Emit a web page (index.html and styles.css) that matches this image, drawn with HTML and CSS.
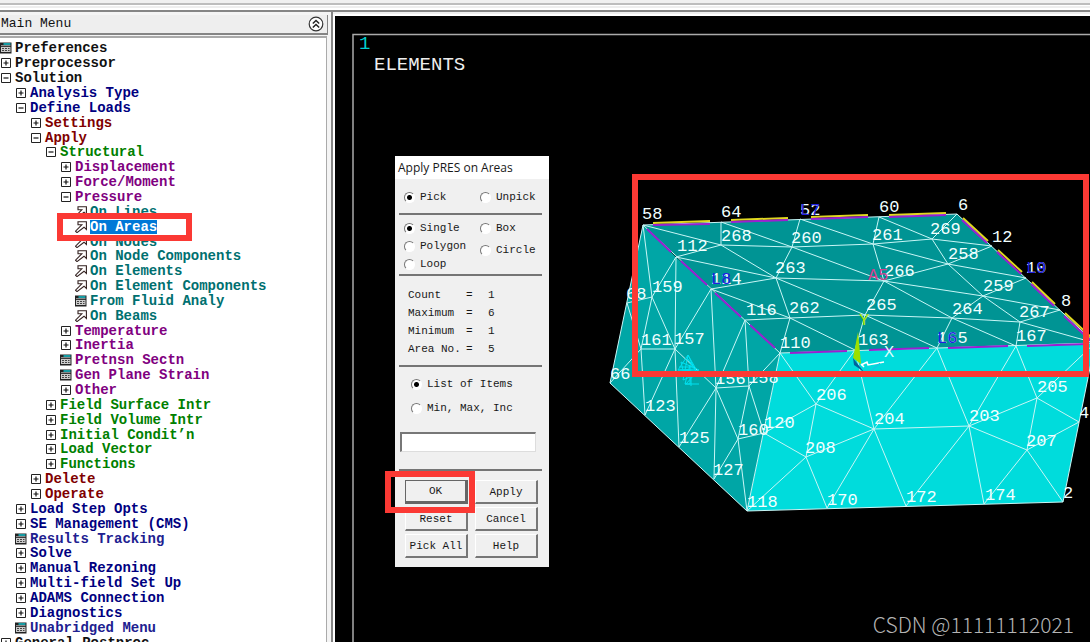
FILE: index.html
```
<!DOCTYPE html>
<html lang="en">
<head>
<meta charset="utf-8">
<title>Main Menu - Apply PRES on Areas</title>
<link rel="stylesheet" href="styles.css">
</head>
<body>
<svg class="defs" width="0" height="0" aria-hidden="true">
  <symbol id="plus" viewBox="0 0 12 12"><path d="M1.500 1.500h9v9h-9z" fill="#fff" stroke="#222"/><path d="M3.500 6h5M6 3.500v5" stroke="#111" stroke-width="1.2"/></symbol>
  <symbol id="minus" viewBox="0 0 12 12"><path d="M1.500 1.500h9v9h-9z" fill="#fff" stroke="#222"/><path d="M3.500 6h5" stroke="#111" stroke-width="1.2"/></symbol>
  <symbol id="form" viewBox="0 0 12 12"><path d="M0 .5h11.500v11H0z" fill="#222"/><path d="M3.500 2h7" stroke="#12c5cf" stroke-width="1.500"/><path d="M1 3.700h9.500" stroke="#ddd" stroke-width=".7"/><path d="M1 5h9.500v5H1z" fill="#ccc"/><path d="M2 6.500h7.500M2 8.500h7.500" stroke="#444" stroke-dasharray="2 1"/></symbol>
  <symbol id="arrow" viewBox="0 0 12 12"><path d="M3 .8H11.400V8.500L9 6.200 2 11.600.5 10.200 6.800 3.800H3z" fill="#fff" stroke="#32201f" stroke-width="1.1"/></symbol>
</svg>
<div class="app">
  <div class="toolbar"></div>
  <div class="workspace">
    <nav class="menu" aria-label="Main Menu">
      <header class="menu-head">
        <h1>Main Menu</h1>
        <button class="collapse" aria-label="Collapse all"><svg width="16" height="16" viewBox="0 0 16 16"><circle cx="8" cy="8" r="6.800" fill="#fff" stroke="#333" stroke-width="1.2"/><path d="M4.800 7.500 8 4.500l3.200 3M4.800 11.500 8 8.500l3.200 3" fill="none" stroke="#222" stroke-width="1.500"/></svg></button>
      </header>
      <ul class="tree">
        <li class="l0"><svg><use href="#form"/></svg><span>Preferences</span></li>
        <li class="l0"><svg><use href="#plus"/></svg><span>Preprocessor</span></li>
        <li class="l0"><svg><use href="#minus"/></svg><span>Solution</span></li>
        <li class="l1"><svg><use href="#plus"/></svg><span>Analysis Type</span></li>
        <li class="l1"><svg><use href="#minus"/></svg><span>Define Loads</span></li>
        <li class="l2"><svg><use href="#plus"/></svg><span>Settings</span></li>
        <li class="l2"><svg><use href="#minus"/></svg><span>Apply</span></li>
        <li class="l3"><svg><use href="#minus"/></svg><span>Structural</span></li>
        <li class="l4"><svg><use href="#plus"/></svg><span>Displacement</span></li>
        <li class="l4"><svg><use href="#plus"/></svg><span>Force/Moment</span></li>
        <li class="l4"><svg><use href="#minus"/></svg><span>Pressure</span></li>
        <li class="l5"><svg><use href="#arrow"/></svg><span>On Lines</span></li>
        <li class="l5 marked"><svg><use href="#arrow"/></svg><span class="selected">On Areas</span></li>
        <li class="l5"><svg><use href="#arrow"/></svg><span>On Nodes</span></li>
        <li class="l5"><svg><use href="#arrow"/></svg><span>On Node Components</span></li>
        <li class="l5"><svg><use href="#arrow"/></svg><span>On Elements</span></li>
        <li class="l5"><svg><use href="#arrow"/></svg><span>On Element Components</span></li>
        <li class="l5"><svg><use href="#form"/></svg><span>From Fluid Analy</span></li>
        <li class="l5"><svg><use href="#arrow"/></svg><span>On Beams</span></li>
        <li class="l4"><svg><use href="#plus"/></svg><span>Temperature</span></li>
        <li class="l4"><svg><use href="#plus"/></svg><span>Inertia</span></li>
        <li class="l4"><svg><use href="#form"/></svg><span>Pretnsn Sectn</span></li>
        <li class="l4"><svg><use href="#form"/></svg><span>Gen Plane Strain</span></li>
        <li class="l4"><svg><use href="#plus"/></svg><span>Other</span></li>
        <li class="l3"><svg><use href="#plus"/></svg><span>Field Surface Intr</span></li>
        <li class="l3"><svg><use href="#plus"/></svg><span>Field Volume Intr</span></li>
        <li class="l3"><svg><use href="#plus"/></svg><span>Initial Condit’n</span></li>
        <li class="l3"><svg><use href="#plus"/></svg><span>Load Vector</span></li>
        <li class="l3"><svg><use href="#plus"/></svg><span>Functions</span></li>
        <li class="l2"><svg><use href="#plus"/></svg><span>Delete</span></li>
        <li class="l2"><svg><use href="#plus"/></svg><span>Operate</span></li>
        <li class="l1"><svg><use href="#plus"/></svg><span>Load Step Opts</span></li>
        <li class="l1"><svg><use href="#plus"/></svg><span>SE Management (CMS)</span></li>
        <li class="l1 soft"><svg><use href="#form"/></svg><span>Results Tracking</span></li>
        <li class="l1"><svg><use href="#plus"/></svg><span>Solve</span></li>
        <li class="l1"><svg><use href="#plus"/></svg><span>Manual Rezoning</span></li>
        <li class="l1"><svg><use href="#plus"/></svg><span>Multi-field Set Up</span></li>
        <li class="l1"><svg><use href="#plus"/></svg><span>ADAMS Connection</span></li>
        <li class="l1"><svg><use href="#plus"/></svg><span>Diagnostics</span></li>
        <li class="l1 soft"><svg><use href="#form"/></svg><span>Unabridged Menu</span></li>
        <li class="l0"><svg><use href="#plus"/></svg><span>General Postproc</span></li>
      </ul>
    </nav>
    <main class="viewport">
      <svg class="model" role="img" aria-label="Element mesh">
        <g transform="translate(-335 -16)">
          <path d="M1100 34.500H353V660" fill="none" stroke="#aaa" stroke-width="1.500"/>
          <text x="359" y="49" class="num cyan">1</text>
          <text x="374" y="70" class="caption">ELEMENTS</text>
          <path d="M643 225 676 257 711 289 745 320 780 353 747 511 610 383z" fill="#00a6a6"/>
          <path d="M643 225 957 214 1095 343 780 353z" fill="#009494"/>
          <path d="M780 353 1095 343 1063 502 747 511z" fill="#00dcdc"/>
          <g class="edges">
            <path d="M643 225 957 214 1095 343 780 353 643 225 610 383 747 511 780 353M747 511 1063 502 1095 343"/>
            <path d="M643 225 721 245 721 222 792 247 721 245 676 257 776 278 721 245M800 219 792 247 776 278 711 289 790 318 776 278 884 281 792 247 873 244 800 219M776 278 865 315 790 318 745 320M790 318 780 353M790 318 855 350 865 315 884 281 873 244 879 217 932 239 873 244 948 264 884 281M957 214 932 239 992 246 948 264 932 239M948 264 1026 278 983 296 948 264M884 281 983 296 1060 310 1020 322 983 296 952 318 884 281M865 315 952 318 1020 322 1095 343M865 315 937 348 952 318 1016 346 1020 322"/>
            <path d="M643 225 652 297 676 257 675 349 652 297 627 303 641 349 652 297M610 383 641 349 675 349 711 289 716 388 675 349 645 415 641 349M675 349 679 447 716 388 714 479 738 439 716 388 749 386 745 320 716 388M780 353 749 386 738 439 747 511M749 386 764 433 738 439"/>
            <path d="M780 353 816 404 855 350 874 429 816 404 764 433 806 457 816 404M747 511 806 457 827 508 874 429 806 457M937 348 874 429 906 506 969 426 874 429M937 348 969 426 1016 346 1037 398 969 426 984 504 1027 450 969 426M1095 343 1037 398 1079 422 1027 450 1037 398M1027 450 1063 502"/>
          </g>
          <g class="boundary">
            <path class="yellow" d="M653 223l57-2M731 220l57-2M811 217l57-2M889 215l57-2M963 218l25 23M998 250l24 22M1032 282l23 22M1065 313l28 26"/>
            <path class="violet" d="M653 225l57-1M731 222l57-2M811 219l57-2M889 217l57-2M962 220l25 23M997 252l24 22M1031 284l23 22M1064 316l28 26M647 229l24 23M681 261l26 24M715 293l26 24M750 325l25 23M790 353l57-2M869 350l60-2M948 348l60-2M1027 346l60-2"/>
          </g>
          <g class="force"><path d="M688 355 678 370 696 369zM688 355 697 374 683 380zM681 362 699 370 684 374zM690 365v19l-5 0zM686 384l8-9M679 367h15l-7-9 9 13-18-1M691 376v10M685 384h14"/></g>
          <g class="labels">
            <text x="642" y="219">58</text><text x="721" y="217">64</text><text x="800" y="215">52</text><text x="879" y="212">60</text><text x="958" y="210">6</text><text x="992" y="242">12</text><text x="1026" y="273">10</text><text x="1061" y="306">8</text>
            <text x="721" y="241">268</text><text x="791" y="243">260</text><text x="872" y="240">261</text><text x="930" y="234">269</text><text x="948" y="259">258</text><text x="677" y="251">112</text><text x="711" y="284">114</text><text x="775" y="273">263</text><text x="884" y="276">266</text><text x="983" y="291">259</text><text x="746" y="315">116</text><text x="789" y="313">262</text><text x="866" y="310">265</text><text x="952" y="314">264</text><text x="1019" y="317">267</text><text x="780" y="348">110</text><text x="858" y="345">163</text><text x="937" y="343">165</text><text x="1016" y="341">167</text>
            <text x="626" y="299">68</text><text x="652" y="292">159</text><text x="641" y="345">161</text><text x="674" y="344">157</text><text x="610" y="379">66</text><text x="715" y="384">156</text><text x="748" y="383">158</text><text x="645" y="411">123</text><text x="679" y="443">125</text><text x="738" y="435">160</text><text x="764" y="428">120</text><text x="713" y="475">127</text><text x="747" y="507">118</text>
            <text x="816" y="400">206</text><text x="805" y="453">208</text><text x="874" y="424">204</text><text x="969" y="421">203</text><text x="1037" y="392">205</text><text x="1026" y="446">207</text><text x="1079" y="418">4</text><text x="827" y="505">170</text><text x="906" y="502">172</text><text x="985" y="500">174</text><text x="1063" y="498">2</text>
            <text class="blue" x="800" y="215">L7</text><text class="blue" x="1026" y="273">L9</text><text class="blue" x="711" y="284">L8</text><text class="blue" x="937" y="343">L6</text><text class="pink" x="868" y="280">A5</text>
          </g>
          <g class="triad"><path d="M858 332 861 364 853 358z" fill="#9be000"/><path d="M853 358l11 14-10-7z" fill="#00649b"/><path d="M861 365l6-3 1 3 16-3M861 364l3 3" fill="none" stroke="#fff" stroke-width="1.500"/><path d="M870 372l10-9" stroke="#2bb0e8" fill="none"/><text x="859" y="325" fill="#a8e600">Y</text><text x="884" y="357" fill="#d9ffff">X</text></g>
          <rect x="635" y="177" width="451" height="197" fill="none" stroke="#fb3934" stroke-width="6"/>
        </g>
      </svg>
      <form class="dialog" aria-label="Apply PRES on Areas">
        <h2>Apply PRES on Areas</h2>
        <div class="body">
          <div class="pair mode">
            <label><input type="radio" name="mode" checked>Pick</label>
            <label><input type="radio" name="mode">Unpick</label>
          </div>
          <hr>
          <div class="pair shape">
            <div class="stack">
              <label><input type="radio" name="shape" checked>Single</label>
              <label><input type="radio" name="shape">Polygon</label>
              <label><input type="radio" name="shape">Loop</label>
            </div>
            <div class="stack wide">
              <label><input type="radio" name="shape">Box</label>
              <label><input type="radio" name="shape">Circle</label>
            </div>
          </div>
          <hr>
          <dl>
            <dt>Count</dt><dd>=</dd><dd>1</dd>
            <dt>Maximum</dt><dd>=</dd><dd>6</dd>
            <dt>Minimum</dt><dd>=</dd><dd>1</dd>
            <dt>Area No.</dt><dd>=</dd><dd>5</dd>
          </dl>
          <hr>
          <div class="entry">
            <label><input type="radio" name="entry" checked>List of Items</label>
            <label><input type="radio" name="entry">Min, Max, Inc</label>
          </div>
          <input class="field" type="text" aria-label="Items">
          <hr>
          <div class="buttons">
            <button type="button" class="default">OK</button><button type="button">Apply</button>
            <button type="button">Reset</button><button type="button">Cancel</button>
            <button type="button">Pick All</button><button type="button">Help</button>
          </div>
        </div>
      </form>
      <p class="credit">CSDN @11111112021</p>
    </main>
  </div>
</div>
</body>
</html>
```
FILE: styles.css
```
*, *::after { box-sizing: border-box; }
body { margin: 0; background: #f0f0f0; font-family: "Liberation Mono", monospace; }
h1, h2, p, ul, dl, dd { margin: 0; padding: 0; font-weight: normal; }
.defs { position: absolute; }
.app { display: flex; flex-direction: column; height: 100vh; overflow: hidden; }
.toolbar { height: 12px; flex: none; border-bottom: 2px solid #858585; background: linear-gradient(#f0f0f0 3px, #bdbdbd 3px, #bdbdbd 5px, #fff 5px, #fff 6px, #eee 6px, #eee 8px, #fff 8px); }
.workspace { flex: 1; display: flex; min-height: 0; }

.menu { width: 333px; flex: none; display: flex; flex-direction: column; padding-top: 3px; border-right: 2px solid #858585; background: #f4f4f4; overflow: hidden; }
.menu-head { display: flex; align-items: center; justify-content: space-between; height: 20px; flex: none; margin-right: 3px; padding: 0 3px 0 1px; background: #eee; border: solid #858585; border-width: 0 1px 2px 0; }
.menu-head h1 { font-size: 13px; line-height: 20px; color: #111; }
.collapse { display: block; padding: 0; border: 0; background: none; height: 16px; }
.collapse svg { display: block; }
.tree { flex: 1; display: grid; grid-auto-rows: 1fr; margin: 1px 4px -8px 0; padding-top: 3px; list-style: none; background: #fff; border: solid #aaa; border-width: 2px 1px 0 0; font-size: 14px; font-weight: bold; line-height: 14px; white-space: nowrap; min-height: 0; }
.tree li { position: relative; display: flex; align-items: center; gap: 3px; min-height: 0; }
.tree svg { width: 12px; height: 12px; flex: none; }
.l0 { color: #111; }
.l1 { color: #000080; padding-left: 15px; }
.l2 { color: #800000; padding-left: 30px; }
.l3 { color: #008000; padding-left: 45px; }
.l4 { color: #800080; padding-left: 60px; }
.l5 { color: #007070; padding-left: 75px; }
.soft { color: #202090; }
.selected { background: #0078d7; color: #fff; }
.marked::after { content: ""; position: absolute; z-index: 1; left: 57px; top: -6px; width: 135px; height: 28px; border: 6px solid #fb3934; }

.viewport { position: relative; flex: 1; min-width: 0; margin: 4px 0 0 2px; background: #000; overflow: hidden; outline: 2px solid #fff; }
.model { display: block; width: 100%; height: 100%; }
.model text { font-size: 17px; }
.model .caption { font-size: 19px; fill: #eee; }
.model .cyan { fill: #00d0d0; font-size: 19px; }
.edges { fill: none; stroke: #c8f6f6; stroke-width: 1; }
.boundary { fill: none; stroke-width: 2; }
.yellow { stroke: #e0d820; }
.violet { stroke: #9a20d0; }
.force { fill: none; stroke: #00e0f0; stroke-width: 1; }
.labels { fill: #f2ffff; }
.blue { fill: #2020e0; }
.pink { fill: #d04090; }

.dialog { position: absolute; left: 60px; top: 140px; width: 154px; background: #f0f0f0; color: #181818; font-size: 11px; }
.dialog h2 { height: 23px; padding-left: 3px; background: #fff; font: 12px/23px "Open Sans", sans-serif; }
.body { padding: 9px 7px 9px 4px; }
.body hr { margin: 0; border: 0; height: 2px; background: #757575; }
.dialog label { display: flex; align-items: center; gap: 5px; height: 18px; }
.dialog [type="radio"] { appearance: none; flex: none; width: 11px; height: 11px; margin: 0; border: 1px solid #fff; border-top-color: #777; border-left-color: #777; border-radius: 50%; background: #fff; }
.dialog [type="radio"]:checked { background: radial-gradient(circle, #000 2px, #fff 3px); }
.pair { display: grid; grid-template-columns: 76px 1fr; padding-left: 5px; }
.mode { height: 25px; }
.shape { height: 59px; padding-top: 4px; }
.wide { display: grid; align-content: start; row-gap: 4px; }
.dialog dl { display: grid; grid-template-columns: 58px 22px 1fr; grid-auto-rows: 18px; align-items: center; height: 89px; padding: 10px 0 0 9px; }
.entry { display: grid; row-gap: 6px; padding: 8px 0 0 12px; }
.field { display: block; width: 136px; height: 20px; margin: 15px 0 17px 1px; padding: 2px; border: solid #777; border-width: 2px 1px 1px 2px; border-right-color: #ddd; border-bottom-color: #ddd; background: #fff; font: inherit; }
.buttons { position: relative; display: grid; grid-template-columns: 1fr 1fr; gap: 3px 7px; padding: 9px 4px 0 6px; }
.buttons button { height: 24px; padding: 0; border: solid #777; border-width: 1px 2px 2px 1px; border-top-color: #fff; border-left-color: #fff; background: #f0f0f0; font: inherit; color: inherit; white-space: nowrap; }
.buttons .default { border-color: #666; border-width: 1px 3px 3px 1px; }
.buttons::after { content: ""; position: absolute; left: -14px; top: 0; width: 90px; height: 42px; border: 6px solid #fb3934; }
.credit { position: absolute; right: 16px; bottom: 3px; font: 300 21px/30px "Noto Sans CJK SC", sans-serif; color: #b4b4b4; }
```
